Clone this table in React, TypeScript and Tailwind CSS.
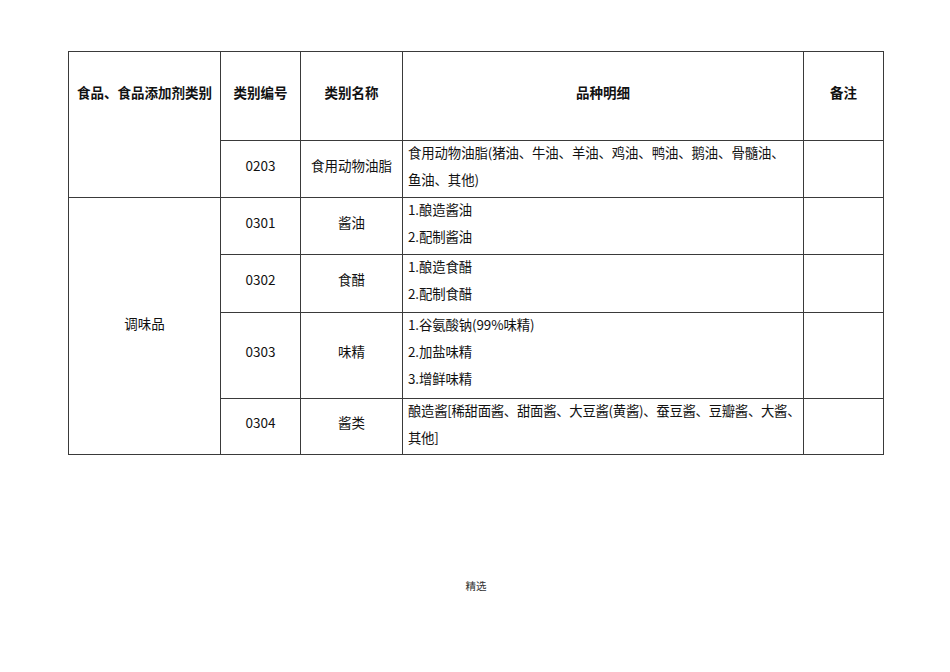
import React from "react";

const font = { fontFamily: '"Noto Sans CJK SC", "Noto Sans", sans-serif' };

function Center({ children, bold = false }: { children: React.ReactNode; bold?: boolean }) {
  return (
    <div className="border-r border-b border-[#3a3a3a] flex items-center justify-center pb-[8px]">
      <span className={bold ? "font-bold" : ""}>{children}</span>
    </div>
  );
}

function Detail({ lines, tight = false }: { lines: string[]; tight?: boolean }) {
  return (
    <div className="border-r border-b border-[#3a3a3a] pl-[5px]">
      <div className={"-mt-[2px] leading-[27px] whitespace-nowrap text-[13.4px] " + (tight ? "tracking-[-0.3px]" : "tracking-[-0.1px]")}>
        {lines.map((l, i) => (
          <div key={i}>{l}</div>
        ))}
      </div>
    </div>
  );
}

function Empty() {
  return <div className="border-r border-b border-[#3a3a3a]" />;
}

export default function App() {
  return (
    <div className="w-[950px] h-[672px] bg-white relative text-[#111] text-[13.5px]" style={font}>
      <div className="pt-[51px] pl-[68px]">
        <div className="grid grid-cols-[152px_80px_102px_401px_80px] grid-rows-[89px_57px_57px_58px_86px_56px] border-l border-t border-[#3a3a3a] w-[816px]">
          <div className="row-span-2 border-r border-b border-[#3a3a3a]">
            <div className="h-[88px] flex items-center justify-center pb-[8px]">
              <span className="font-bold">食品、食品添加剂类别</span>
            </div>
          </div>
          <Center bold>类别编号</Center>
          <Center bold>类别名称</Center>
          <Center bold>品种明细</Center>
          <Center bold>备注</Center>

          <Center>0203</Center>
          <Center>食用动物油脂</Center>
          <Detail lines={["食用动物油脂(猪油、牛油、羊油、鸡油、鸭油、鹅油、骨髓油、", "鱼油、其他)"]} />
          <Empty />

          <div className="row-span-4 border-r border-b border-[#3a3a3a] flex items-center justify-center pb-[6px]">
            <span>调味品</span>
          </div>
          <Center>0301</Center>
          <Center>酱油</Center>
          <Detail lines={["1.酿造酱油", "2.配制酱油"]} />
          <Empty />

          <Center>0302</Center>
          <Center>食醋</Center>
          <Detail lines={["1.酿造食醋", "2.配制食醋"]} />
          <Empty />

          <Center>0303</Center>
          <Center>味精</Center>
          <Detail lines={["1.谷氨酸钠(99%味精)", "2.加盐味精", "3.增鲜味精"]} />
          <Empty />

          <Center>0304</Center>
          <Center>酱类</Center>
          <Detail tight lines={["酿造酱[稀甜面酱、甜面酱、大豆酱(黄酱)、蚕豆酱、豆瓣酱、大酱、", "其他]"]} />
          <Empty />
        </div>
      </div>
      <div className="mt-[123px] flex justify-center pl-[2px]">
        <span className="text-[10.5px] text-[#333]">精选</span>
      </div>
    </div>
  );
}
